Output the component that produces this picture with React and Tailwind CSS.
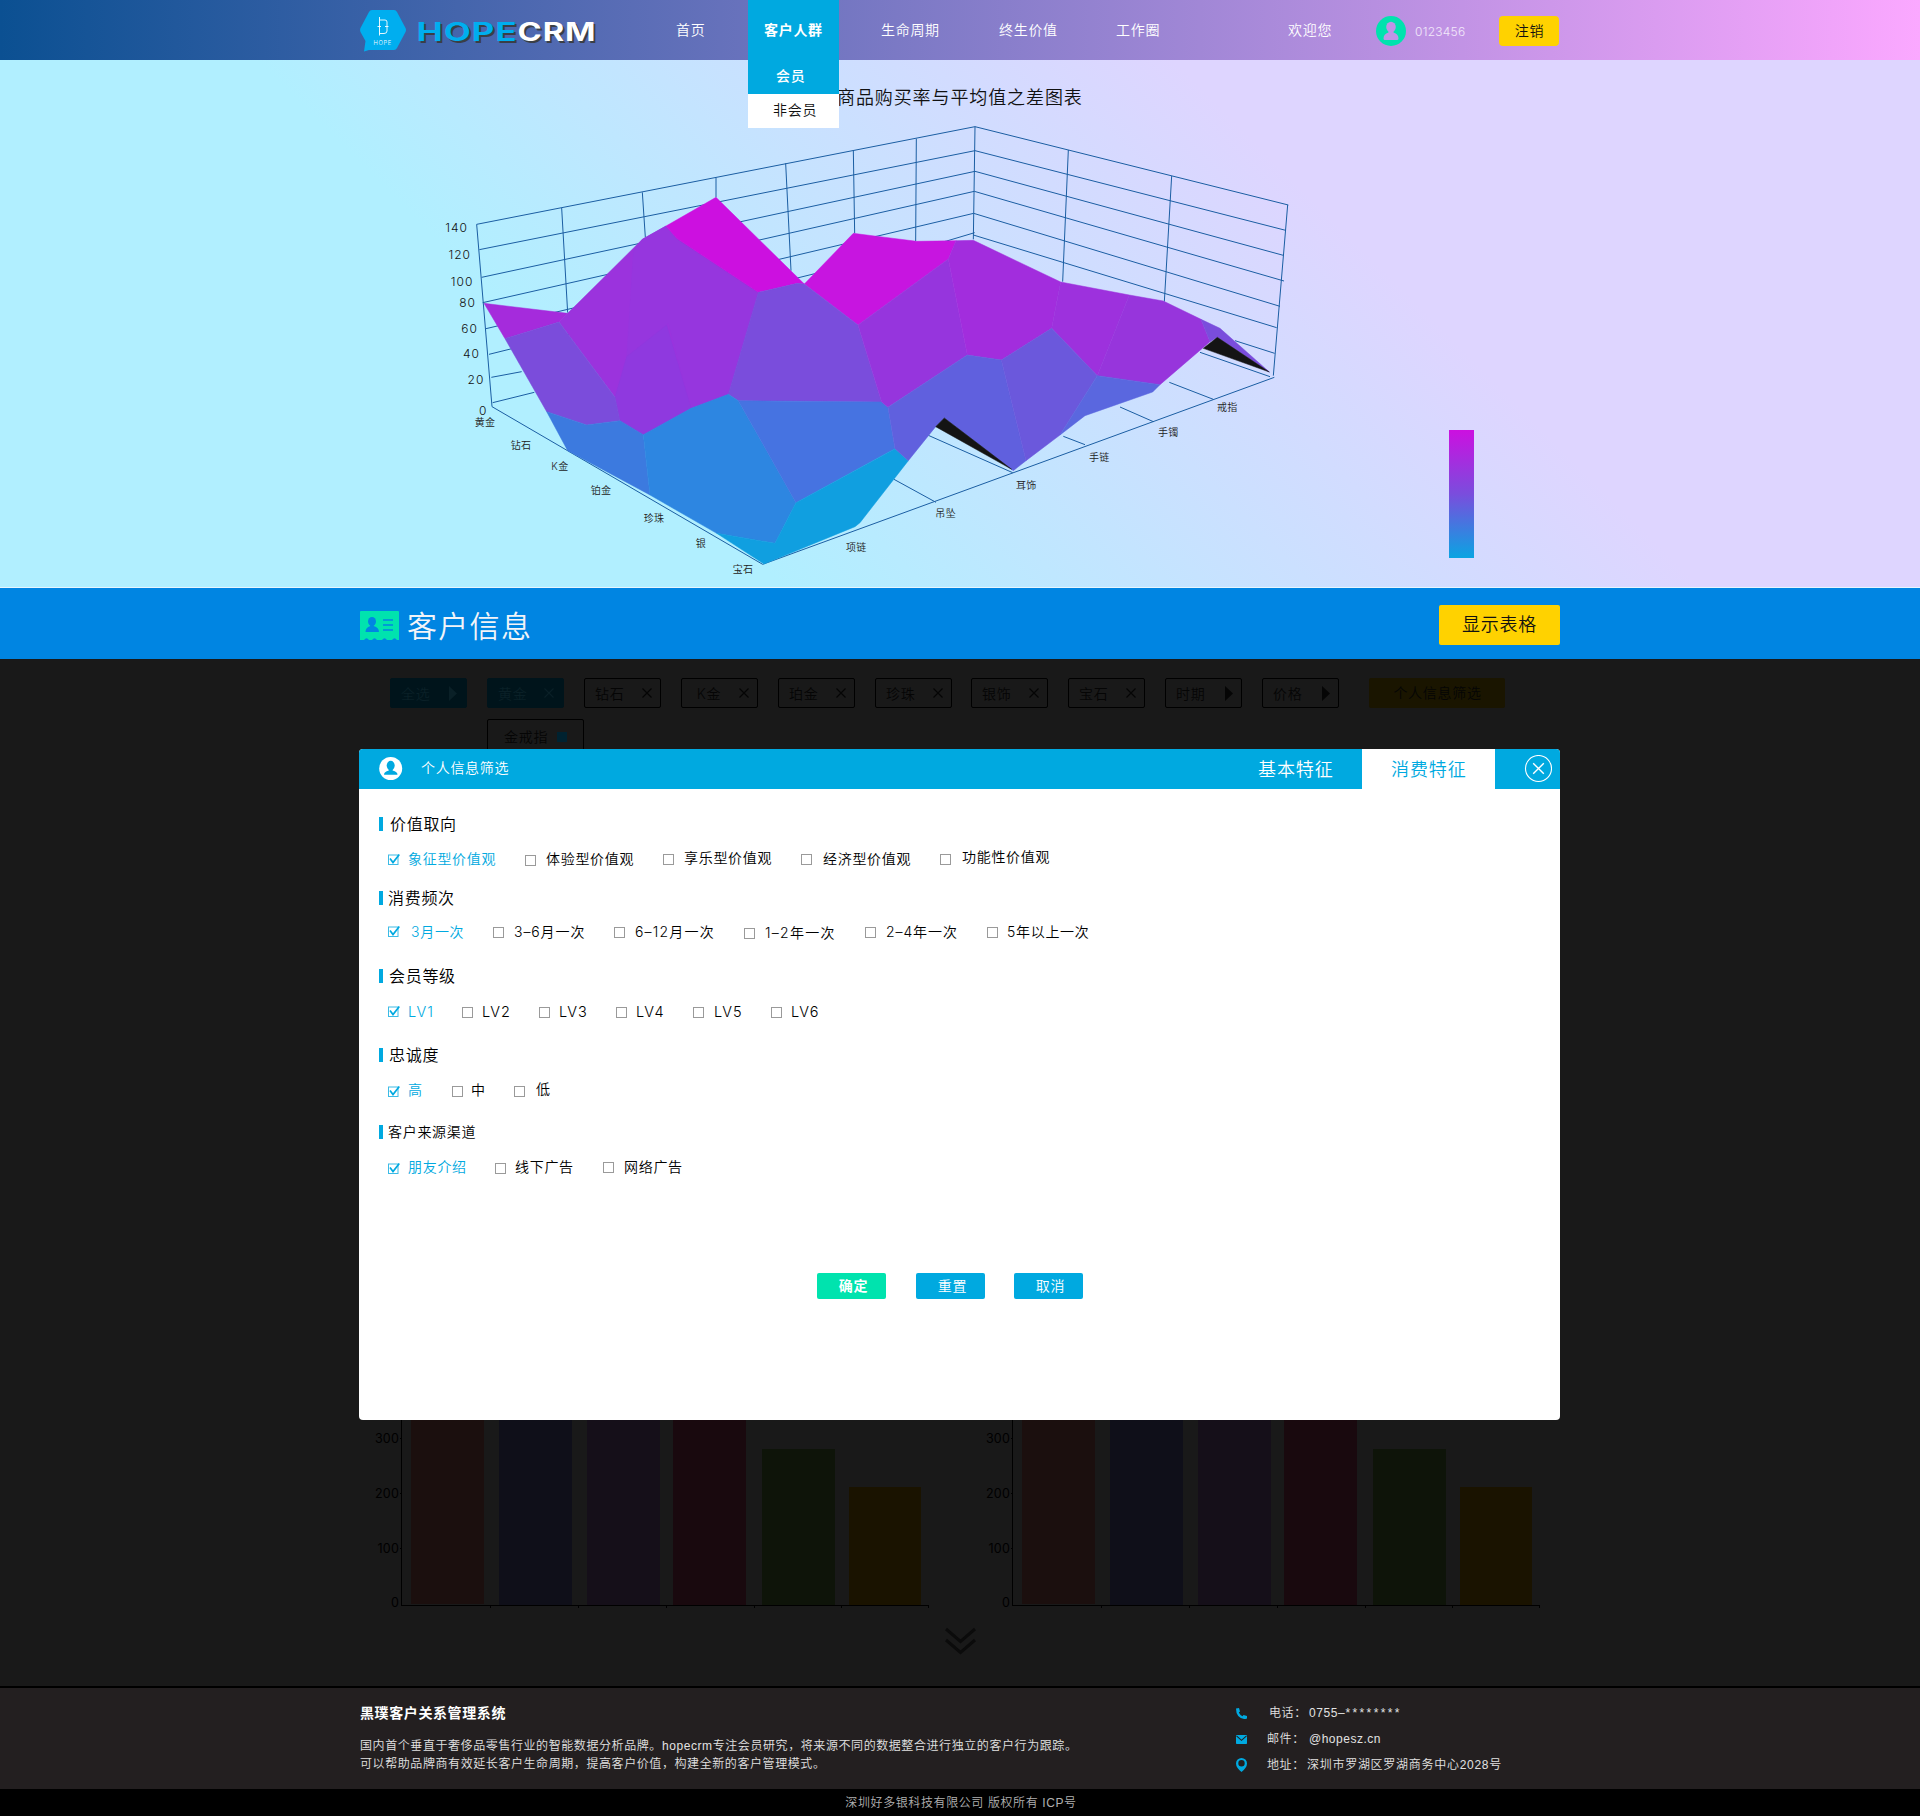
import React from "react";

const FONT = "font-['Inter','Noto_Sans_CJK_SC',sans-serif] font-[350]";
const FOOT_FONT = "font-['Liberation_Sans','Noto_Sans_CJK_SC',sans-serif]";

/* ---------- header ---------- */

function Logo() {
  return (
    <svg width="240" height="60" viewBox="0 0 240 60" className="block shrink-0">
      <path d="M12 10 H34 Q36 10 37 12 L45.500 28 Q46.500 30 45.500 32 L37 48 Q36 50 34 50 H9 L4 51.500 L5.500 41 L0.500 32 Q-0.300 30 0.500 28 L9 12 Q10 10 12 10 Z" fill="#00aeef" />
      <g stroke="#fff" strokeWidth="0.9" fill="none">
        <path d="M19.500 17 V35.500 M19.500 20 H25 Q27 20 27 22 V31 Q27 33.500 24 33.500 H19.500 M17.500 26.500 H21 M25 26.500 H28.500" />
      </g>
      <text x="13.500" y="44.800" fontSize="6" fill="#fff" textLength="18.500" lengthAdjust="spacingAndGlyphs">HOPE</text>
      <g fontWeight="700" fontSize="25" fontFamily="Inter, 'Liberation Sans', sans-serif">
        <g fill="#3a3f46">
          <text x="58.500" y="42.500" textLength="101" lengthAdjust="spacingAndGlyphs">HOPE</text>
          <text x="159.500" y="42.500" textLength="79" lengthAdjust="spacingAndGlyphs">CRM</text>
        </g>
        <text x="56.500" y="41" fill="#00aeef" textLength="101" lengthAdjust="spacingAndGlyphs">HOPE</text>
        <text x="157.500" y="41" fill="#fff" textLength="79" lengthAdjust="spacingAndGlyphs">CRM</text>
      </g>
    </svg>
  );
}

function Header() {
  return (
    <header className="relative z-10 h-[60px] bg-[linear-gradient(90deg,#0b5092,#fba8ff)]">
      <div className="mx-auto flex h-full w-[1200px] text-[14px] leading-[60px] tracking-[0.7px] text-white">
        <Logo />
        <span className="ml-[76px] w-[72px]">首页</span>
        <div className="relative w-[91px] bg-[#00a9e0] pl-4 font-bold">
          客户人群
          <div className="absolute top-[60px] left-0 w-[91px] font-[350]">
            <div className="h-[34px] bg-[#00a9e0] pl-7 font-medium leading-[31px]">会员</div>
            <div className="h-[34px] bg-white pl-[25px] leading-[31px] text-[#111]">非会员</div>
          </div>
        </div>
        <span className="ml-[42px] w-[118px]">生命周期</span>
        <span className="w-[117px]">终生价值</span>
        <span className="w-[172px]">工作圈</span>
        <span className="w-[88px]">欢迎您</span>
        <svg width="30" height="30" viewBox="0 0 30 30" className="mt-4 block shrink-0">
          <circle cx="15" cy="15" r="15" fill="#00e3ae" />
          <ellipse cx="15" cy="11" rx="4.800" ry="5.200" fill="#c094e6" />
          <path d="M12.500 14 H17.500 V16.500 Q22.500 18 22.500 22.500 Q22.500 24 21 24 H9 Q7.500 24 7.500 22.500 Q7.500 18 12.500 16.500 Z" fill="#c094e6" />
        </svg>
        <span className="ml-[9px] w-[84px] text-[12px] leading-[63px] tracking-[0.25px] text-white/80">0123456</span>
        <button className="mt-4 block h-[30px] w-[60px] rounded bg-[#ffd200] pl-px text-center leading-[30px] text-[#111]">注销</button>
      </div>
    </header>
  );
}

/* ---------- 3D surface chart (chart units are thirds of a pixel) ---------- */

const GRID = [
  "140,343 1635,50 2575,285",
  "148,419 1635,122 2567,361",
  "155,502 1635,184 2560,436",
  "158,578 1633,244 2562,513",
  "168,656 1631,310 2550,589",
  "177,733 1550,393 1634,368",
  "1630,375 2540,653",
  "184,802 275,785",
  "188,878 313,847",
  "2415,692 2534,730",
  "140,343 186,890 998,1363 2533,802",
  "395,294 413,608",
  "637,247 646,382",
  "858,203 858,262",
  "1067,160 1083,482",
  "1270,122 1274,370",
  "1459,86 1457,393",
  "1635,50 1630,388",
  "1915,120 1898,515",
  "2225,198 2203,575",
  "2573,285 2530,797",
  "1392,1108 1518,1177",
  "1495,976 1748,1088",
  "1900,979 1965,1004",
  "2070,891 2170,935",
  "2218,817 2350,868",
  "2310,727 2520,800",
];

const FACES = [
  ["#9b33dd", "413,610 637,388 708,348 740,385 985,547 895,853 783,895 640,974 570,932 555,862 387,636"],
  ["#9636de", "610,425 637,388 708,348 740,385 985,547 895,853 783,895 715,640 590,740"],
  ["#8f39df", "590,740 710,645 783,895 640,974 570,932 555,862"],
  ["#cc10e0", "708,348 858,262 1123,522 1102,520 985,547 740,385"],
  ["#c715e0", "1123,522 1270,370 1350,380 1460,394 1578,392 1555,447 1284,645"],
  ["#a52bdc", "162,580 413,610 387,636 225,686"],
  ["#7b4cdb", "225,686 387,636 555,862 570,932 470,945 350,905"],
  ["#7a4ddc", "1102,520 1123,522 1284,645 1355,876 925,872 895,853 985,547"],
  ["#3c7adf", "350,905 470,945 570,932 640,974 660,1155 413,1022"],
  ["#2d86e1", "640,974 783,895 895,853 925,872 1098,1178 1035,1300 860,1270 660,1155"],
  ["#4673e1", "925,872 1355,876 1374,892 1395,1016 1350,1040 1098,1178"],
  ["#109fe0", "1098,1178 1395,1016 1435,1052 1290,1238 1275,1250 1002,1362 860,1270 1035,1300"],
  ["#9635dd", "1284,645 1555,447 1612,735 1374,892 1355,876"],
  ["#a22ddd", "1578,392 1630,391 1892,516 1865,655 1714,750 1612,735 1555,447"],
  ["#9d31dd", "1892,516 2098,555 2002,797 1865,655"],
  ["#9735dc", "2098,555 2200,573 2313,628 2340,695 2190,824 2002,797"],
  ["#6060de", "1612,735 1714,750 1788,1052 1750,1082 1543,924 1517,950 1435,1052 1395,1016 1374,892"],
  ["#6b58dc", "1714,750 1865,655 2002,797 1890,975 1788,1052"],
  ["#5a67df", "2002,797 2190,824 2168,846 1965,917 1890,975"],
  ["#7a4ddc", "2313,628 2370,655 2518,786 2362,682 2340,695"],
  ["#141414", "1517,950 1543,924 1745,1078"],
  ["#141414", "2320,715 2362,682 2518,786"],
];

const Y_LABELS = [
  ["140", 112, 353], ["120", 121, 434], ["100", 128, 515], ["80", 136, 578],
  ["60", 142, 656], ["40", 148, 731], ["20", 161, 809], ["0", 170, 902],
];

const X_LABELS = [
  ["黄金", 134, 938], ["钻石", 242, 1007], ["K金", 364, 1069], ["铂金", 482, 1142], ["珍珠", 641, 1225],
  ["银", 797, 1300], ["宝石", 908, 1379], ["项链", 1248, 1313], ["吊坠", 1516, 1211], ["耳饰", 1758, 1126],
  ["手链", 1977, 1043], ["手镯", 2184, 968], ["戒指", 2361, 893],
];

function SurfaceChart() {
  return (
    <section className="h-[528px] border-b border-[#e6f6ff] bg-[linear-gradient(45deg,#b1efff_32%,#ded5ff_69.5%)]">
      <div className="mx-auto flex w-[1200px] flex-col">
        <h1 className="mt-[23px] ml-[477px] text-[18px] leading-[30px] tracking-[0.9px] text-[#111]">商品购买率与平均值之差图表</h1>
        <div className="mt-[-3px] flex">
          <svg width="880" height="477" viewBox="0 0 2640 1431" className="ml-[70px] block shrink-0">
            <g fill="none" stroke="#1b5ea3" strokeWidth="3">
              {GRID.map((p, i) => <polyline key={i} points={p} />)}
            </g>
            {FACES.map(([c, p], i) => (
              <polygon key={i} points={p} fill={c} stroke={c} strokeWidth="1.5" />
            ))}
            <g fontSize="36" fill="#111" textAnchor="end" letterSpacing="3">
              {Y_LABELS.map(([t, x, y]) => <text key={t} x={x + 2} y={y + 12}>{t}</text>)}
            </g>
            <g fontSize="30" fill="#222" letterSpacing="1">
              {X_LABELS.map(([t, x, y]) => <text key={t} x={x} y={y + 11}>{t}</text>)}
            </g>
          </svg>
          <div className="mt-[320px] ml-[139px] h-[128px] w-[25px] bg-[linear-gradient(180deg,#cc10e0,#7a4ddd_50%,#0aa4e2)]" />
        </div>
      </div>
    </section>
  );
}

/* ---------- title bar ---------- */

function InfoBar() {
  return (
    <div className="h-[71px] bg-[#0085e2]">
      <div className="mx-auto flex h-full w-[1200px]">
        <svg width="39" height="29" viewBox="0 0 39 29" className="mt-[23px] block shrink-0">
          <path d="M1 0 H38 Q39 0 39 1 V29 H37 Q34.500 25.500 32 29 H27 Q24.500 25.500 22 29 H17 Q14.500 25.500 12 29 H9 Q6.500 25.500 4 29 H0 V1 Q0 0 1 0 Z" fill="#00e3ae" />
          <ellipse cx="12" cy="10.500" rx="4" ry="4.500" fill="#0085e2" />
          <path d="M10.300 13 H13.700 V15 Q19 16.500 19 21 H5.500 Q5.500 16.500 10.300 15 Z" fill="#0085e2" />
          <path d="M23 9 H33 M23 14 H33 M23 19 H33" stroke="#0085e2" strokeWidth="1.500" />
        </svg>
        <h2 className="ml-2 w-[1032px] text-[30px] leading-[76px] tracking-[1.300px] text-[#f2f4f8]">客户信息</h2>
        <button className="mt-[17px] block h-10 w-[121px] rounded-xs bg-[#ffd200] text-[18px] leading-10 tracking-[0.8px] text-[#111]">显示表格</button>
      </div>
    </div>
  );
}

/* ---------- dimmed page content ---------- */

function Cross() {
  return (
    <svg width="10" height="10" viewBox="0 0 10 10" className="block">
      <path d="M0.500 0.500 L9.500 9.500 M9.500 0.500 L0.500 9.500" stroke="currentColor" strokeWidth="1.100" />
    </svg>
  );
}

function Arrow() {
  return (
    <svg width="8" height="15" viewBox="0 0 8 15" className="block">
      <path d="M0 0 L8 7.500 L0 15 Z" fill="currentColor" />
    </svg>
  );
}

const CHIP_ROWS = [
  [["全选", "arrow", true], ["黄金", "cross", true], ["钻石", "cross"], [" K金", "cross"], ["珀金", "cross"], ["珍珠", "cross"]],
  [["银饰", "cross"], ["宝石", "cross"], ["时期", "arrow"], ["价格", "arrow"]],
];

function Chip({ label, icon, on }) {
  return (
    <div
      className={
        on
          ? "flex h-[30px] w-[77px] items-center justify-between rounded-xs border border-[#00141b] bg-[#00141b] pr-[9px] pl-[10px] text-[#0a2027]"
          : "flex h-[30px] w-[77px] items-center justify-between rounded-xs border border-black pr-[8px] pl-[10px] text-[#050505]"
      }
    >
      <span className="whitespace-pre">{label}</span>
      {icon === "arrow" ? <Arrow /> : <Cross />}
    </div>
  );
}

function Filters() {
  return (
    <div className="mx-auto w-[1200px] pt-[19px] pl-[30px] text-[14px] tracking-[0.7px]">
      <div className="flex gap-[19px]">
        {CHIP_ROWS.map((row, i) => (
          <div key={i} className="flex gap-5">
            {row.map(([label, icon, on]) => <Chip key={label} label={label} icon={icon} on={on} />)}
          </div>
        ))}
        <div className="ml-[11px] h-[30px] w-[136px] rounded-xs bg-[#1a1500] pl-px text-center leading-[30px] text-[#050505]">个人信息筛选</div>
      </div>
      <div className="mt-[11px] ml-[97px] flex h-10 w-[97px] items-center rounded-xs border border-black pb-[5px] pl-4 text-[#050505]">
        <span>金戒指</span>
        <i className="ml-[9px] block h-[10px] w-[10px] bg-[#002230]" />
      </div>
    </div>
  );
}

const BARS = [
  "ml-[9px] mb-px w-[73px] h-[200px] bg-[#1b0f0e]",
  "ml-[15px] w-[73px] h-[200px] bg-[#0f0f19]",
  "ml-[15px] w-[73px] h-[200px] bg-[#150f19]",
  "ml-[13px] w-[73px] h-[200px] bg-[#19090e]",
  "ml-[16px] w-[73px] h-[156px] bg-[#0e1409]",
  "ml-[14px] w-[72px] h-[118px] bg-[#1a1300]",
];

function BarChart() {
  return (
    <div className="flex w-[611px]">
      <div className="flex h-[195px] w-[40px] flex-col text-right text-[12.5px] font-normal leading-[20px] tracking-[0.2px] text-black">
        <span className="mt-[14px]">300</span>
        <span className="mt-[35px]">200</span>
        <span className="mt-[35px]">100</span>
        <span className="mt-[34px]">0</span>
      </div>
      <div className="flex w-[3px] flex-col items-end">
        <i className="mt-[23px] block h-px w-[2px] bg-black" />
        <i className="mt-[54px] block h-px w-[2px] bg-black" />
        <i className="mt-[54px] block h-px w-[2px] bg-black" />
      </div>
      <div className="-ml-px">
        <div className="flex h-[191px] w-[528px] items-end overflow-hidden border-b border-l border-black">
          {BARS.map((c) => <div key={c} className={`${c} shrink-0`} />)}
        </div>
        <div className="flex w-[528px]">
          <i className="block h-[2px] w-[90px] border-r border-black" />
          <i className="block h-[2px] w-[88px] border-r border-black" />
          <i className="block h-[2px] w-[88px] border-r border-black" />
          <i className="block h-[2px] w-[88px] border-r border-black" />
          <i className="block h-[2px] w-[87px] border-r border-black" />
          <i className="block h-[2px] w-[87px] border-r border-black" />
        </div>
      </div>
    </div>
  );
}

/* ---------- modal ---------- */

function CheckBox({ on }) {
  return on ? (
    <svg width="12" height="11" viewBox="0 0 12 11" className="block shrink-0">
      <rect x="0.500" y="1" width="9.500" height="9.500" fill="none" stroke="#3cbbe6" />
      <path d="M2 4.500 L5 8.500 L11.300 0.500" fill="none" stroke="#00a9e0" strokeWidth="1.700" />
    </svg>
  ) : (
    <span className="block h-[11px] w-[11px] shrink-0 border border-[#9a9a9a]" />
  );
}

/* Each option: label, width class up to the next option, label offset class, checkbox offset class. */
const GROUPS = [
  {
    title: "价值取向", head: "pl-[7px] text-[16px]", wrap: "mt-[25px]", row: "mt-[18px]",
    items: [
      ["象征型价值观", "w-[137px]", "pl-2", "mt-2"],
      ["体验型价值观", "w-[138px]", "pl-[10px]", "mt-[9px]"],
      ["享乐型价值观", "w-[138px]", "pl-[10px] -mt-px", "mt-2"],
      ["经济型价值观", "w-[139px]", "pl-[11px]", "mt-2"],
      ["功能性价值观", "w-[139px]", "pl-[11px] -mt-[2px]", "mt-2"],
    ],
  },
  {
    title: "消费频次", head: "pl-[5px] text-[16px]", wrap: "mt-[22px]", row: "mt-[17px]",
    items: [
      ["3月一次", "w-[105px]", "pl-[11px]", "mt-[7px]"],
      ["3–6月一次", "w-[121px]", "pl-[10px] tracking-[0.9px]", "mt-2"],
      ["6–12月一次", "w-[130px]", "pl-[10px] tracking-[1.2px]", "mt-2"],
      ["1–2年一次", "w-[121px]", "pl-[10px] mt-px tracking-[1.3px]", "mt-[9px]"],
      ["2–4年一次", "w-[122px]", "pl-[10px] tracking-[0.9px]", "mt-2"],
      ["5年以上一次", "w-[120px]", "pl-[9px]", "mt-2"],
    ],
  },
  {
    title: "会员等级", head: "pl-[6px] text-[16px]", wrap: "mt-[27px]", row: "mt-[19px]",
    items: [
      ["LV1", "w-[74px]", "pl-2 text-[14.5px] tracking-[1.2px]", "mt-[7px]"],
      ["LV2", "w-[77px]", "pl-[9px] text-[14.5px] tracking-[1px]", "mt-2"],
      ["LV3", "w-[77px]", "pl-[9px] text-[14.5px] tracking-[1px]", "mt-2"],
      ["LV4", "w-[77px]", "pl-[9px] text-[14.5px] tracking-[1px]", "mt-2"],
      ["LV5", "w-[78px]", "pl-[10px] text-[14.5px] tracking-[1px]", "mt-2"],
      ["LV6", "w-[77px]", "pl-[9px] text-[14.5px] tracking-[1px]", "mt-2"],
    ],
  },
  {
    title: "忠诚度", head: "pl-[6px] text-[16px]", wrap: "mt-[26px]", row: "mt-[18px]",
    items: [
      ["高", "w-[64px]", "pl-2", "mt-[9px]"],
      ["中", "w-[62px]", "pl-[8px]", "mt-[9px]"],
      ["低", "w-[60px]", "pl-[11px] -mt-px", "mt-[9px]"],
    ],
  },
  {
    title: "客户来源渠道", head: "pl-[5px] text-[14px]", wrap: "mt-[25px]", row: "mt-[18px]",
    items: [
      ["朋友介绍", "w-[107px]", "pl-2", "mt-[9px]"],
      ["线下广告", "w-[108px]", "pl-[9px]", "mt-[9px]"],
      ["网络广告", "w-[100px]", "pl-[10px]", "mt-2"],
    ],
  },
];

function Modal() {
  return (
    <div className="absolute top-[90px] left-[359px] h-[671px] w-[1201px] overflow-hidden rounded bg-white text-[14px] tracking-[0.7px]">
      <div className="flex h-10 bg-[#00a9e0] text-white">
        <svg width="24" height="24" viewBox="0 0 24 24" className="mt-2 ml-5 block shrink-0">
          <circle cx="11.700" cy="11.500" r="11.500" fill="#fff" />
          <ellipse cx="11.700" cy="8.600" rx="4" ry="4.800" fill="#00a9e0" />
          <path d="M9.800 12 H13.600 V13.600 Q18.500 14.800 18.500 17.800 H5 Q5 14.800 9.800 13.600 Z" fill="#00a9e0" />
        </svg>
        <span className="ml-[18px] w-[837px] leading-[38px]">个人信息筛选</span>
        <span className="w-[104px] text-[18px] leading-[42px] tracking-[0.9px]">基本特征</span>
        <span className="w-[133px] bg-white pl-[29px] text-[18px] leading-[42px] tracking-[0.9px] text-[#00a9e0]">消费特征</span>
        <svg width="28" height="28" viewBox="0 0 28 28" className="mt-[6px] ml-[29px] block shrink-0">
          <circle cx="14.500" cy="13.500" r="13" fill="none" stroke="#fff" strokeWidth="1.100" />
          <path d="M9.200 8.200 L19.800 18.800 M19.800 8.200 L9.200 18.800" stroke="#fff" strokeWidth="1.400" />
        </svg>
      </div>
      <div className="flex flex-col pl-5">
        {GROUPS.map((g) => (
          <section key={g.title} className={g.wrap}>
            <h3 className="flex h-5 items-center text-black">
              <i className="block h-[14px] w-1 bg-[#00a9e0]" />
              <span className={`${g.head} leading-5`}>{g.title}</span>
            </h3>
            <div className={`${g.row} flex h-[14px] pl-[9px] leading-[14px]`}>
              {g.items.map(([label, w, off, box], i) => (
                <label key={label} className={`${w} -mt-[6px] flex shrink-0 items-start whitespace-nowrap`}>
                  <span className={box}><CheckBox on={i === 0} /></span>
                  <span className={off}>
                    <span className={i === 0 ? "block leading-[26px] text-[#00a9e0]" : "block leading-[26px] text-black"}>{label}</span>
                  </span>
                </label>
              ))}
            </div>
          </section>
        ))}
      </div>
      <div className="mt-[99px] flex pl-[458px] leading-[26px] text-white">
        <button className="h-[26px] w-[69px] rounded-xs bg-[#00e3ae] pl-1 font-bold">确定</button>
        <button className="ml-[30px] h-[26px] w-[69px] rounded-xs bg-[#00a9e0] pl-1">重置</button>
        <button className="ml-[29px] h-[26px] w-[69px] rounded-xs bg-[#00a9e0] pl-1">取消</button>
      </div>
    </div>
  );
}

function Content() {
  return (
    <main className="relative h-[1029px] border-b-2 border-black bg-[#191919]">
      <Filters />
      <div className="mt-[656px] flex pl-[359px]">
        <BarChart />
        <BarChart />
      </div>
      <svg width="34" height="30" viewBox="0 0 34 30" className="mx-auto mt-[15px] block">
        <path d="M3 4 L17.500 16.500 L32 4 M3 15 L17.500 27.500 L32 15" fill="none" stroke="#0b0b0b" strokeWidth="3" />
      </svg>
      <Modal />
    </main>
  );
}

/* ---------- footer ---------- */

function Footer() {
  return (
    <footer className={FOOT_FONT}>
      <div className="h-[101px] bg-[#231f20]">
        <div className="mx-auto flex w-[1200px] text-[12px] tracking-[0.6px] text-[#e2e2e2]">
          <div className="w-[876px] whitespace-nowrap">
            <h4 className="mt-[15px] text-[14px] font-bold leading-5 text-white">黑璞客户关系管理系统</h4>
            <p className="mt-[14px] leading-[18px] tracking-[0.58px]">
              国内首个垂直于奢侈品零售行业的智能数据分析品牌。hopecrm专注会员研究，将来源不同的数据整合进行独立的客户行为跟踪。
              <br />
              可以帮助品牌商有效延长客户生命周期，提高客户价值，构建全新的客户管理模式。
            </p>
          </div>
          <div className="flex flex-col gap-[6px] pt-[15px] leading-5">
            <div className="flex items-center">
              <svg width="11" height="11" viewBox="0 0 11 11" className="block">
                <path d="M0 0.500 L3 0 L4 3.500 L2.800 4.500 Q4 7 6.500 8.200 L7.500 7 L11 8 V10.500 Q9.500 11 8 11 Q0 9.500 0 0.500 Z" fill="#00a9e0" />
              </svg>
              <span className="ml-[22px] w-[40px]">电话：</span>
              <span>0755–<span className="tracking-[2.400px]">********</span></span>
            </div>
            <div className="flex items-center">
              <svg width="11" height="9" viewBox="0 0 11 9" className="block">
                <rect width="11" height="9" rx="0.800" fill="#00a9e0" />
                <path d="M0.500 0.800 L5.500 5.300 L10.500 0.800" fill="none" stroke="#231f20" strokeWidth="1.100" />
              </svg>
              <span className="ml-[20px] w-[42px]">邮件：</span>
              <span className="tracking-[0.5px]">@hopesz.cn</span>
            </div>
            <div className="flex items-center">
              <svg width="11" height="14" viewBox="0 0 11 14" className="block">
                <path fillRule="evenodd" d="M5.500 0 A5.500 5.500 0 0 1 11 5.500 Q11 9.500 5.500 14 Q0 9.500 0 5.500 A5.500 5.500 0 0 1 5.500 0 Z M5.500 2 A3.200 3.200 0 1 0 5.500 8.400 A3.200 3.200 0 1 0 5.500 2 Z" fill="#00a9e0" />
              </svg>
              <span className="ml-[20px] w-[40px]">地址：</span>
              <span className="tracking-[0.720px]">深圳市罗湖区罗湖商务中心2028号</span>
            </div>
          </div>
        </div>
      </div>
      <div className="h-[27px] bg-black pl-[2px] text-center text-[12px] leading-[29px] tracking-[0.6px] text-[#b0b0b0]">
        深圳好多银科技有限公司 版权所有 ICP号
      </div>
    </footer>
  );
}

export default function App() {
  return (
    <div className={`h-[1816px] w-[1920px] overflow-hidden bg-[#191919] ${FONT}`}>
      <Header />
      <SurfaceChart />
      <InfoBar />
      <Content />
      <Footer />
    </div>
  );
}
